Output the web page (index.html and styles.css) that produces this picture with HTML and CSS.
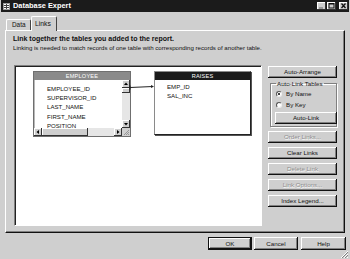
FILE: index.html
```html
<!DOCTYPE html>
<html lang="en">
<head>
    <meta charset="UTF-8">
    <title>Database Expert</title>
    <link rel="stylesheet" href="styles.css">
</head>
<body>
    <div class="window">
        <div class="titlebar">
            <svg class="app-icon" width="7" height="7" viewBox="0 0 7 7">
                <rect x="0.5" y="0.5" width="6" height="6" fill="#fff" stroke="#999"/>
                <path d="M1 2.5h5M1 4.5h5M3.5 1v5" stroke="#444" stroke-width="1"/>
            </svg>
            <span class="title">Database Expert</span>
            <div class="win-btns">
                <span class="win-btn">
                    <svg width="9" height="8" viewBox="0 0 9 8"><path d="M2 6h4" stroke="#888" stroke-width="1.5"/></svg>
                </span>
                <span class="win-btn">
                    <svg width="9" height="8" viewBox="0 0 9 8"><rect x="2" y="1.5" width="5" height="4.5" fill="none" stroke="#111" stroke-width="1"/><path d="M2 2h5" stroke="#111"/></svg>
                </span>
                <span class="win-btn close">
                    <svg width="9" height="8" viewBox="0 0 9 8"><path d="M2.5 1.5l4 4.5M6.5 1.5l-4 4.5" stroke="#111" stroke-width="1.3"/></svg>
                </span>
            </div>
        </div>

        <div class="tabs">
            <div class="tab">Data</div>
            <div class="tab active">Links</div>
        </div>

        <div class="panel">
            <div class="heading">Link together the tables you added to the report.</div>
            <div class="sub">Linking is needed to match records of one table with corresponding records of another table.</div>

            <div class="panel-body">
                <div class="canvas">
                    <div class="db-table employee">
                        <div class="db-head">EMPLOYEE</div>
                        <div class="db-grid">
                            <div class="fields">
                                <div>EMPLOYEE_ID</div>
                                <div>SUPERVISOR_ID</div>
                                <div>LAST_NAME</div>
                                <div>FIRST_NAME</div>
                                <div>POSITION</div>
                            </div>
                            <div class="vscroll">
                                <span class="arrow">
                                    <svg width="6" height="6" viewBox="0 0 6 6"><path d="M3 1.5L5 4H1z" fill="#000"/></svg>
                                </span>
                                <span class="thumb-v"></span>
                                <span class="track"></span>
                                <span class="arrow">
                                    <svg width="6" height="6" viewBox="0 0 6 6"><path d="M3 4.5L5 2H1z" fill="#000"/></svg>
                                </span>
                            </div>
                            <div class="hscroll">
                                <span class="arrow">
                                    <svg width="6" height="6" viewBox="0 0 6 6"><path d="M1.5 3L4 1v4z" fill="#000"/></svg>
                                </span>
                                <span class="thumb-h"></span>
                                <span class="track"></span>
                                <span class="arrow">
                                    <svg width="6" height="6" viewBox="0 0 6 6"><path d="M4.5 3L2 1v4z" fill="#000"/></svg>
                                </span>
                            </div>
                            <div class="corner">
                                <svg width="8" height="8" viewBox="0 0 8 8"><path d="M7 2L2 7M7 4L4 7M7 6L6 7" stroke="#888" stroke-width="0.8"/></svg>
                            </div>
                        </div>
                    </div>

                    <svg class="link-line" width="26" height="6" viewBox="0 0 26 6">
                        <path d="M1 3.5L24 2.5" stroke="#222" stroke-width="1"/>
                        <path d="M1 1.5v4" stroke="#222" stroke-width="1"/>
                        <path d="M25 2.5l-3 -1.5v3z" fill="#222"/>
                    </svg>

                    <div class="db-table raises">
                        <div class="db-head dark">RAISES</div>
                        <div class="fields">
                            <div>EMP_ID</div>
                            <div>SAL_INC</div>
                        </div>
                    </div>
                </div>

                <div class="side">
                    <button class="btn">Auto-Arrange</button>
                    <fieldset class="group">
                        <legend>Auto-Link Tables</legend>
                        <div class="radio"><span class="dot checked"></span>By Name</div>
                        <div class="radio"><span class="dot"></span>By Key</div>
                        <button class="btn auto-link">Auto-Link</button>
                    </fieldset>
                    <button class="btn" disabled>Order Links...</button>
                    <button class="btn">Clear Links</button>
                    <button class="btn" disabled>Delete Link</button>
                    <button class="btn" disabled>Link Options...</button>
                    <button class="btn">Index Legend...</button>
                </div>
            </div>
        </div>

        <div class="footer">
            <button class="btn default">OK</button>
            <button class="btn">Cancel</button>
            <button class="btn help">Help</button>
        </div>

        <svg class="grip" width="9" height="9" viewBox="0 0 9 9">
            <path d="M8 1L1 8M8 4L4 8M8 7L7 8" stroke="#fff" stroke-width="1"/>
            <path d="M8 2L2 8M8 5L5 8" stroke="#808080" stroke-width="1"/>
        </svg>
    </div>
</body>
</html>
```

FILE: styles.css
```css
:root {
    --face: #cfcfcf;
    --light: #ffffff;
    --shadow: #808080;
    --dark: #111111;
    --text: #111111;
    --muted: #8c8c8c;
}
html, body {
    margin: 0;
    padding: 0;
    background: var(--face);
    font-family: 'Liberation Sans', Arial, sans-serif;
    color: var(--text);
}
.window {
    width: 350px;
    height: 259px;
    box-sizing: border-box;
    padding: 0 1px;
    background: var(--face);
    display: flex;
    flex-direction: column;
    position: relative;
    overflow: hidden;
}
/* Title bar */
.titlebar {
    height: 12px;
    background: #1b1b1b;
    display: flex;
    align-items: center;
    padding-left: 2px;
    color: #fff;
}
.app-icon {
    margin-right: 3px;
}
.title {
    font-weight: bold;
    font-size: 7.4px;
    line-height: 12px;
}
.win-btns {
    margin-left: auto;
    display: flex;
    align-items: center;
    gap: 1px;
    padding-right: 1px;
}
.win-btn {
    width: 9px;
    height: 8px;
    background: var(--face);
    box-shadow: inset -1px -1px #333, inset 1px 1px #fff;
    display: flex;
}
.win-btn.close {
    margin-left: 2px;
}
/* Tabs */
.tabs {
    height: 18px;
    display: flex;
    align-items: flex-end;
    padding-left: 5px;
}
.tab {
    box-sizing: border-box;
    width: 25px;
    height: 11px;
    font-size: 6.4px;
    line-height: 10px;
    padding-left: 5px;
    border: 1px solid #fff;
    border-right-color: #444;
    border-bottom: none;
    border-radius: 2px 2px 0 0;
}
.tab.active {
    width: 26px;
    height: 15px;
    margin-bottom: -1px;
    padding-top: 2px;
    padding-left: 3px;
    background: var(--face);
    position: relative;
    z-index: 1;
    font-size: 6.8px;
}
/* Tab page */
.panel {
    margin-left: 4px;
    width: 340px;
    height: 203px;
    box-sizing: border-box;
    border: 1px solid;
    border-color: #fff #111 #111 #fff;
    box-shadow: inset -1px -1px var(--shadow);
    padding: 3px 7px 0 7px;
}
.heading {
    font-weight: bold;
    font-size: 7px;
    line-height: 9px;
}
.sub {
    font-size: 6.1px;
    line-height: 9px;
}
.panel-body {
    margin-top: 13px;
    display: flex;
    gap: 6px;
}
.canvas {
    margin-left: 1px;
    width: 248px;
    height: 161px;
    box-sizing: border-box;
    background: #fff;
    border: 1px solid;
    border-color: var(--shadow) #fff #fff var(--shadow);
    box-shadow: inset 1px 1px #222;
    position: relative;
}
/* Tables drawn on the link canvas */
.db-table {
    position: absolute;
    top: 5px;
    box-sizing: border-box;
    background: #fff;
    font-size: 6.1px;
    display: flex;
    flex-direction: column;
}
.employee {
    left: 18px;
    width: 98px;
    height: 66px;
    border: 1px solid #6f6f6f;
    box-shadow: inset 0 0 0 1px #b8b8b8;
}
.raises {
    left: 139px;
    width: 97px;
    height: 64px;
    border: 1px solid #8a8a8a;
    border-right-color: #222;
    border-bottom-color: #222;
    box-shadow: 1px 1px 0 #555;
}
.db-head {
    height: 8px;
    line-height: 8px;
    background: #8a8a8a;
    color: #fff;
    text-align: center;
    font-size: 5.6px;
    letter-spacing: 0.2px;
}
.db-head.dark {
    background: #1a1a1a;
}
.db-grid {
    flex: 1;
    display: grid;
    grid-template-columns: 1fr 8px;
    grid-template-rows: 1fr 8px;
    min-height: 0;
}
.fields {
    padding: 4px 0 0 13px;
    line-height: 9.2px;
    overflow: hidden;
}
.raises .fields {
    padding-top: 1.5px;
    padding-left: 12px;
}
.vscroll, .hscroll {
    display: flex;
    background: #e6e6e6;
}
.vscroll {
    flex-direction: column;
}
.arrow {
    width: 8px;
    height: 8px;
    flex: none;
    box-sizing: border-box;
    background: var(--face);
    box-shadow: inset -1px -1px #333, inset 1px 1px #fff;
    display: flex;
    align-items: center;
    justify-content: center;
}
.thumb-v {
    height: 5px;
    background: var(--face);
    box-shadow: inset -1px -1px #333, inset 1px 1px #fff;
}
.thumb-h {
    width: 46px;
    flex: none;
    background: var(--face);
    box-shadow: inset -1px -1px #333, inset 1px 1px #fff;
}
.track {
    flex: 1;
}
.corner {
    background: var(--face);
    display: flex;
}
.link-line {
    position: absolute;
    left: 114px;
    top: 18px;
}
/* Right-hand buttons */
.side {
    width: 69px;
    padding-top: 1px;
    display: flex;
    flex-direction: column;
}
.btn {
    height: 12px;
    padding: 0;
    margin: 0;
    border: none;
    background: var(--face);
    box-shadow: inset -1px -1px #111, inset 1px 1px #fff, inset -2px -2px var(--shadow);
    font-family: inherit;
    font-size: 6.2px;
    color: var(--text);
    line-height: 12px;
}
.btn:disabled {
    color: var(--muted);
    text-shadow: 0.5px 0.5px #fff;
}
.side .btn + .btn,
.group + .btn {
    margin-top: 4px;
}
.group {
    margin: 2px 0 0 2px;
    padding: 1px 2px 3px 4px;
    min-width: 0;
    height: 47px;
    box-sizing: border-box;
    border: 1px solid var(--shadow);
    box-shadow: 1px 1px #fff, inset 1px 1px #fff;
    font-size: 6.2px;
}
.group legend {
    padding: 0 1px;
    margin-left: 1px;
    line-height: 7px;
}
.radio {
    display: flex;
    align-items: center;
    height: 11px;
    margin-left: 1px;
}
.dot {
    width: 6px;
    height: 6px;
    box-sizing: border-box;
    border-radius: 50%;
    background: #fff;
    border: 1px solid;
    border-color: #555 #eee #eee #555;
    margin-right: 4px;
    position: relative;
}
.dot.checked::after {
    content: "";
    position: absolute;
    left: 1px;
    top: 1px;
    width: 2px;
    height: 2px;
    border-radius: 50%;
    background: #000;
}
.btn.auto-link {
    width: 62px;
    margin-top: 2px;
}
/* Dialog buttons */
.footer {
    margin-top: 4px;
    display: flex;
    justify-content: flex-end;
    gap: 2px;
    padding-right: 3px;
}
.footer .btn {
    width: 44px;
    height: 13px;
    line-height: 13px;
}
.footer .btn.default {
    box-shadow: inset 0 0 0 1px #111, inset -2px -2px #111, inset 2px 2px #fff, inset -3px -3px var(--shadow);
}
.footer .btn.help {
    width: 45px;
    margin-left: 1px;
}
.grip {
    position: absolute;
    right: 1px;
    bottom: 0;
}
```
